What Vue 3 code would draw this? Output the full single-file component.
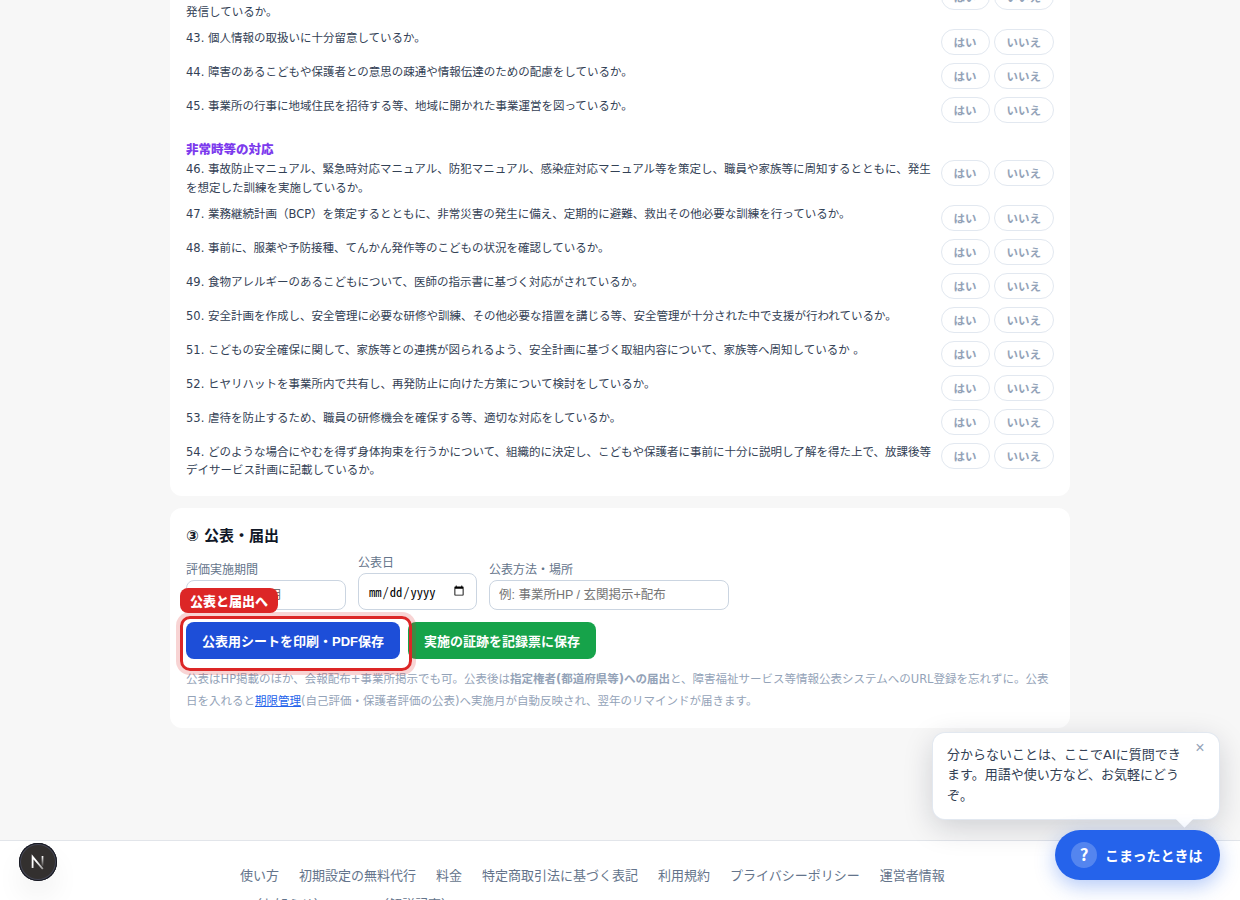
<script setup>
const topItems = [
  { no: 42, text: '定期的に通信等を発行することや、HPやSNS等を活用することにより、活動概要や行事予定、連絡体制等の情報をこどもや保護者に対して\n発信しているか。' },
  { no: 43, text: '個人情報の取扱いに十分留意しているか。' },
  { no: 44, text: '障害のあるこどもや保護者との意思の疎通や情報伝達のための配慮をしているか。' },
  { no: 45, text: '事業所の行事に地域住民を招待する等、地域に開かれた事業運営を図っているか。' }
];

const emergencyItems = [
  { no: 46, text: '事故防止マニュアル、緊急時対応マニュアル、防犯マニュアル、感染症対応マニュアル等を策定し、職員や家族等に周知するとともに、発生を想定した訓練を実施しているか。' },
  { no: 47, text: '業務継続計画（BCP）を策定するとともに、非常災害の発生に備え、定期的に避難、救出その他必要な訓練を行っているか。' },
  { no: 48, text: '事前に、服薬や予防接種、てんかん発作等のこどもの状況を確認しているか。' },
  { no: 49, text: '食物アレルギーのあるこどもについて、医師の指示書に基づく対応がされているか。' },
  { no: 50, text: '安全計画を作成し、安全管理に必要な研修や訓練、その他必要な措置を講じる等、安全管理が十分された中で支援が行われているか。' },
  { no: 51, text: 'こどもの安全確保に関して、家族等との連携が図られるよう、安全計画に基づく取組内容について、家族等へ周知しているか 。' },
  { no: 52, text: 'ヒヤリハットを事業所内で共有し、再発防止に向けた方策について検討をしているか。' },
  { no: 53, text: '虐待を防止するため、職員の研修機会を確保する等、適切な対応をしているか。' },
  { no: 54, text: 'どのような場合にやむを得ず身体拘束を行うかについて、組織的に決定し、こどもや保護者に事前に十分に説明し了解を得た上で、放課後等デイサービス計画に記載しているか。' }
];

const groups = [
  { title: '', items: topItems },
  { title: '非常時等の対応', items: emergencyItems }
];

const footerLinks = [
  '使い方',
  '初期設定の無料代行',
  '料金',
  '特定商取引法に基づく表記',
  '利用規約',
  'プライバシーポリシー',
  '運営者情報',
  'X（お知らせ）',
  'note（解説記事）'
];
</script>

<template>
  <div class="page">
    <main class="content">
      <section class="card checklist">
        <div v-for="group in groups" :key="group.title" class="group">
          <div v-if="group.title" class="group-title">{{ group.title }}</div>
          <div v-for="item in group.items" :key="item.no" class="row">
            <div class="question">{{ item.no }}. {{ item.text }}</div>
            <div class="answers">
              <button class="pill">はい</button>
              <button class="pill">いいえ</button>
            </div>
          </div>
        </div>
      </section>

      <section class="card publish">
        <h2>③ 公表・届出</h2>
        <div class="fields">
          <label class="field">
            評価実施期間
            <input class="period" type="text" placeholder="例: 2026年10月">
          </label>
          <label class="field">
            公表日
            <input class="date" type="date">
          </label>
          <label class="field">
            公表方法・場所
            <input class="place" type="text" placeholder="例: 事業所HP / 玄関掲示+配布">
          </label>
        </div>
        <div class="actions">
          <div class="guide-target">
            <button class="btn btn-print">公表用シートを印刷・PDF保存</button>
            <div class="guide-ring"></div>
            <div class="guide-label">公表と届出へ</div>
          </div>
          <button class="btn btn-save">実施の証跡を記録票に保存</button>
        </div>
        <p class="note">公表はHP掲載のほか、会報配布+事業所掲示でも可。公表後は<b>指定権者(都道府県等)への届出</b>と、障害福祉サービス等情報公表システムへのURL登録を忘れずに。公表日を入れると<a href="#">期限管理</a>(自己評価・保護者評価の公表)へ実施月が自動反映され、翌年のリマインドが届きます。</p>
      </section>
    </main>

    <footer class="footer">
      <nav class="footer-links">
        <a v-for="link in footerLinks" :key="link">{{ link }}</a>
      </nav>
    </footer>

    <div class="bubble">
      分からないことは、ここでAIに質問できます。用語や使い方など、お気軽にどうぞ。
      <button class="bubble-close">×</button>
    </div>
    <button class="help"><span class="help-icon">?</span>こまったときは</button>

    <div class="dev-badge">
      <svg width="38" height="38" viewBox="0 0 38 38" fill="none">
        <defs>
          <linearGradient id="stem" x1="0" y1="13" x2="0" y2="24" gradientUnits="userSpaceOnUse">
            <stop stop-color="#fff" />
            <stop offset="1" stop-color="#fff" stop-opacity="0" />
          </linearGradient>
          <linearGradient id="slash" x1="18" y1="18" x2="24.5" y2="26" gradientUnits="userSpaceOnUse">
            <stop stop-color="#fff" />
            <stop offset="1" stop-color="#fff" stop-opacity="0.5" />
          </linearGradient>
        </defs>
        <path d="M13.6 25V13.8L23.8 26" stroke="url(#slash)" stroke-width="1.8" />
        <path d="M23.5 13V23" stroke="url(#stem)" stroke-width="1.7" />
      </svg>
    </div>
  </div>
</template>

<style>
body {
  margin: 0;
  overflow: hidden;
}
</style>

<style scoped>
.page {
  height: 900px;
  overflow: hidden;
  display: flex;
  flex-direction: column;
  background: #f7f7f7;
  color: #111827;
  font-family: "DejaVu Sans", "Noto Sans CJK JP", sans-serif;
  position: relative;
}

.page * {
  box-sizing: border-box;
}

.content {
  width: 900px;
  height: 840px;
  flex: none;
  margin: 0 auto;
}

.card {
  background: #fff;
  border-radius: 12px;
  padding: 16px;
}

.checklist {
  margin-top: -35.6px;
  margin-bottom: 12px;
  padding-bottom: 12px;
}

.group-title {
  margin-top: 17px;
  font-size: 12.5px;
  line-height: 12px;
  font-weight: 800;
  color: #7c3aed;
}

.row {
  display: flex;
  align-items: flex-start;
  gap: 8px;
  padding: 4px 0;
}

.question {
  flex: 1;
  font-size: 11.5px;
  line-height: 1.6;
  color: #334155;
  white-space: pre-line;
}

.answers {
  display: flex;
  gap: 4px;
}

button {
  font-family: "Liberation Sans", "Noto Sans CJK JP", sans-serif;
  cursor: pointer;
}

.pill {
  height: 26px;
  padding: 0 12px;
  border: 1px solid #e2e8f0;
  border-radius: 13px;
  background: #fff;
  color: #94a3b8;
  font-size: 11.5px;
  font-weight: 700;
}

.publish {
  height: 220px;
}

h2 {
  margin: 0 0 6px;
  font-size: 15px;
  line-height: 24px;
  font-weight: 700;
}

.fields {
  display: flex;
  align-items: flex-end;
  gap: 12px;
}

.field {
  display: flex;
  flex-direction: column;
  font-size: 12px;
  line-height: 18px;
  color: #64748b;
}

.field input {
  margin-top: 1px;
  height: 30px;
  padding: 0 9px;
  border: 1px solid #cbd5e1;
  border-radius: 8px;
  background: #fff;
  font-family: "Liberation Sans", "Noto Sans CJK JP", sans-serif;
  font-size: 12.5px;
}

.field .period {
  width: 160px;
}

.field .date {
  width: 119px;
  height: 37px;
  font-family: "Noto Sans Mono CJK JP", monospace;
}

.field .place {
  width: 240px;
}

.actions {
  display: flex;
  gap: 8px;
  margin-top: 12px;
}

.guide-target {
  position: relative;
}

.btn {
  display: block;
  height: 37px;
  padding: 0 16px;
  border: 0;
  border-radius: 8px;
  color: #fff;
  font-size: 13px;
  font-weight: 700;
}

.btn-print {
  background: #1d4ed8;
}

.btn-save {
  background: #16a34a;
}

.guide-ring {
  position: absolute;
  z-index: 2;
  left: -6px;
  top: -6px;
  width: 232px;
  height: 55px;
  border: 3px solid #dc2626;
  border-radius: 10px;
  box-shadow: 0 0 0 4px rgba(220, 38, 38, 0.2);
}

.guide-label {
  position: absolute;
  z-index: 3;
  left: -6px;
  top: -34px;
  height: 25px;
  padding: 0 10px;
  border-radius: 8px;
  background: #dc2626;
  color: #fff;
  font-size: 13px;
  line-height: 27px;
  font-weight: 800;
  white-space: nowrap;
}

.note {
  margin: 10px 0 0;
  font-size: 11.5px;
  line-height: 1.9;
  color: #94a3b8;
}

.note a {
  color: #2563eb;
}

.footer {
  flex: none;
  height: 120px;
  border-top: 1px solid #e2e5ea;
  background: #fff;
}

.footer-links {
  display: flex;
  flex-wrap: wrap;
  gap: 9px 20px;
  width: 760px;
  margin: 0 auto;
  padding-top: 25px;
  font-size: 13px;
  line-height: 20px;
  color: #64748b;
}

.bubble {
  position: absolute;
  left: 933px;
  top: 733px;
  width: 286px;
  height: 86px;
  padding: 12px 36px 12px 14px;
  border-radius: 12px;
  background: #fff;
  box-shadow: 0 0 0 1px #e2e8f0, 0 8px 30px rgba(15, 23, 42, 0.18);
  color: #334155;
  font-size: 13px;
  line-height: 20.4px;
}

.bubble::after {
  content: '';
  position: absolute;
  right: 28px;
  bottom: -6px;
  width: 13px;
  height: 13px;
  background: #fff;
  transform: rotate(45deg);
}

.bubble-close {
  position: absolute;
  top: 6px;
  right: 10px;
  width: 18px;
  height: 18px;
  padding: 0;
  border: 0;
  background: none;
  color: #94a3b8;
  font-size: 16px;
  line-height: 18px;
}

.help {
  position: absolute;
  left: 1055px;
  top: 830px;
  width: 165px;
  height: 50px;
  display: flex;
  align-items: center;
  gap: 8px;
  padding: 0 16px;
  border: 0;
  border-radius: 25px;
  background: #2563eb;
  box-shadow: 0 6px 20px rgba(37, 99, 235, 0.35);
  color: #fff;
  font-size: 14px;
  font-weight: 700;
  white-space: nowrap;
}

.help-icon {
  width: 26px;
  height: 26px;
  border-radius: 50%;
  background: rgba(255, 255, 255, 0.22);
  font-family: "Noto Sans CJK JP", sans-serif;
  font-size: 17px;
  line-height: 24px;
  text-align: center;
}

.dev-badge {
  position: absolute;
  left: 19px;
  top: 843px;
  width: 38px;
  height: 38px;
  border-radius: 50%;
  background: #33302f;
  box-shadow: inset 0 0 0 1px #15171f, inset 0 0 0 2px #454654, 0 16px 32px -8px rgba(0, 0, 0, 0.16);
}

.dev-badge svg {
  display: block;
}
</style>
